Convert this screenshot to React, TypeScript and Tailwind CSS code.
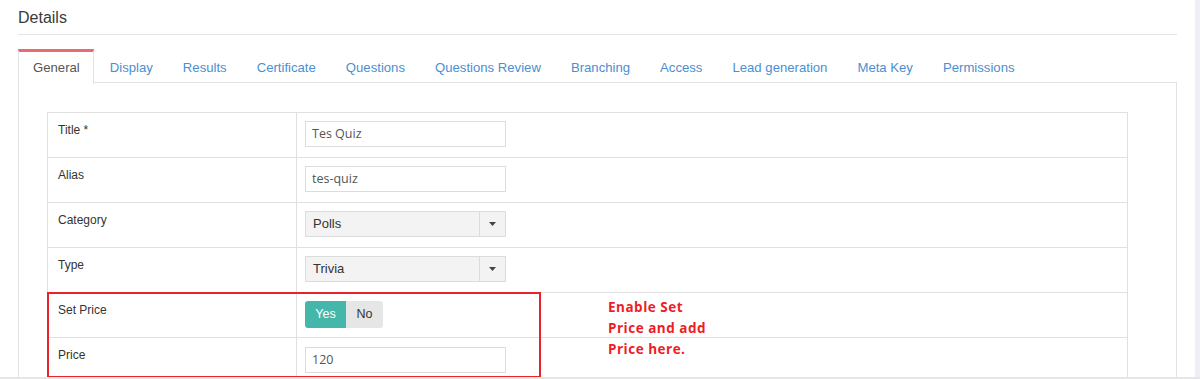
import React from "react";

const tabs = [
  "General",
  "Display",
  "Results",
  "Certificate",
  "Questions",
  "Questions Review",
  "Branching",
  "Access",
  "Lead generation",
  "Meta Key",
  "Permissions",
];

function TextInput({ value }: { value: string }) {
  return (
    <div
      className="w-[201px] h-[26px] border border-[#dcdcdc] bg-white flex items-center px-[6px] text-[12.5px] text-[#555]"
      style={{ fontFamily: '"Open Sans", "Noto Sans", sans-serif' }}
    >
      {value}
    </div>
  );
}

function SelectBox({ value }: { value: string }) {
  return (
    <div className="w-[201px] h-[26px] border border-[#dcdcdc] bg-[#f3f3f3] flex items-stretch text-[13px] text-[#333]">
      <div className="flex-1 flex items-center px-[7px]">{value}</div>
      <div className="w-[26px] border-l border-[#dcdcdc] flex items-center justify-center">
        <svg width="7" height="4" viewBox="0 0 7 4">
          <path d="M0 0 L7 0 L3.5 4 Z" fill="#444" />
        </svg>
      </div>
    </div>
  );
}

function Row({
  label,
  children,
  top,
  last,
}: {
  label: string;
  children: React.ReactNode;
  top: number;
  last?: boolean;
}) {
  return (
    <div className={`flex h-[45px] ${last ? "" : "border-b border-[#e0e0e0]"}`}>
      <div className="w-[249px] border-r border-[#e0e0e0] pl-[10px] pt-[8px] text-[12px] leading-[18px] text-[#333]">
        {label}
      </div>
      <div className="flex-1 pl-[8px]" style={{ paddingTop: top }}>
        {children}
      </div>
    </div>
  );
}

export default function App() {
  return (
    <div
      className="w-[1200px] h-[379px] overflow-hidden flex flex-col bg-white"
      style={{ fontFamily: '"Liberation Sans", Arial, sans-serif' }}
    >
      <div className="flex h-[377px] overflow-hidden">
        <div className="w-[1195px] pl-[18px] pr-[18px] relative">
          <div className="h-[35px] border-b border-[#e5e5e5] flex items-center pt-[1px]">
            <span className="text-[16px] text-[#3a3a3a]">Details</span>
          </div>
          <div className="mt-[14px] flex h-[34px] border-b border-[#e3e3e3]">
            {tabs.map((t, i) =>
              i === 0 ? (
                <div
                  key={t}
                  className="h-[35px] pl-[14px] pr-[13px] mr-[2px] border-t-[3px] border-t-[#eb6a6f] border-l border-r border-[#e3e3e3] bg-white flex items-center text-[13.15px] text-[#555]"
                >
                  {t}
                </div>
              ) : (
                <div
                  key={t}
                  className="h-[34px] px-[14px] mr-[2px] pt-[3px] flex items-center text-[13.15px] text-[#4a8fd1]"
                >
                  {t}
                </div>
              )
            )}
          </div>
          <div className="border-l border-r border-[#e3e3e3] h-[400px] pt-[29px] pl-[28px]">
            <div className="w-[1081px] border border-[#e0e0e0]">
              <Row label="Title *" top={8}>
                <TextInput value="Tes Quiz" />
              </Row>
              <Row label="Alias" top={8}>
                <TextInput value="tes-quiz" />
              </Row>
              <Row label="Category" top={8}>
                <SelectBox value="Polls" />
              </Row>
              <Row label="Type" top={8}>
                <SelectBox value="Trivia" />
              </Row>
              <Row label="Set Price" top={8}>
                <div className="flex w-[78px] h-[27px] rounded-[3px] overflow-hidden text-[12.5px]">
                  <div className="w-[41px] bg-[#45b7aa] text-white flex items-center justify-center">
                    Yes
                  </div>
                  <div className="flex-1 bg-[#e6e6e6] text-[#333] flex items-center justify-center">
                    No
                  </div>
                </div>
              </Row>
              <Row label="Price" top={9} last>
                <TextInput value="120" />
              </Row>
            </div>
          </div>

          <div className="absolute left-[47px] top-[292px] w-[494px] h-[86px] border-2 border-[#e8232b]" />
          <div
            className="absolute left-[608px] top-[297px] text-[13.5px] font-bold leading-[21px] tracking-[0.5px] text-[#ee1d25]"
            style={{ fontFamily: '"Open Sans", "Noto Sans", sans-serif' }}
          >
            Enable Set
            <br />
            Price and add
            <br />
            Price here.
          </div>
        </div>
        <div className="flex-1 bg-[#eef0f5]" />
      </div>
      <div className="h-[2px] bg-[#e6e6e6]" />
    </div>
  );
}
